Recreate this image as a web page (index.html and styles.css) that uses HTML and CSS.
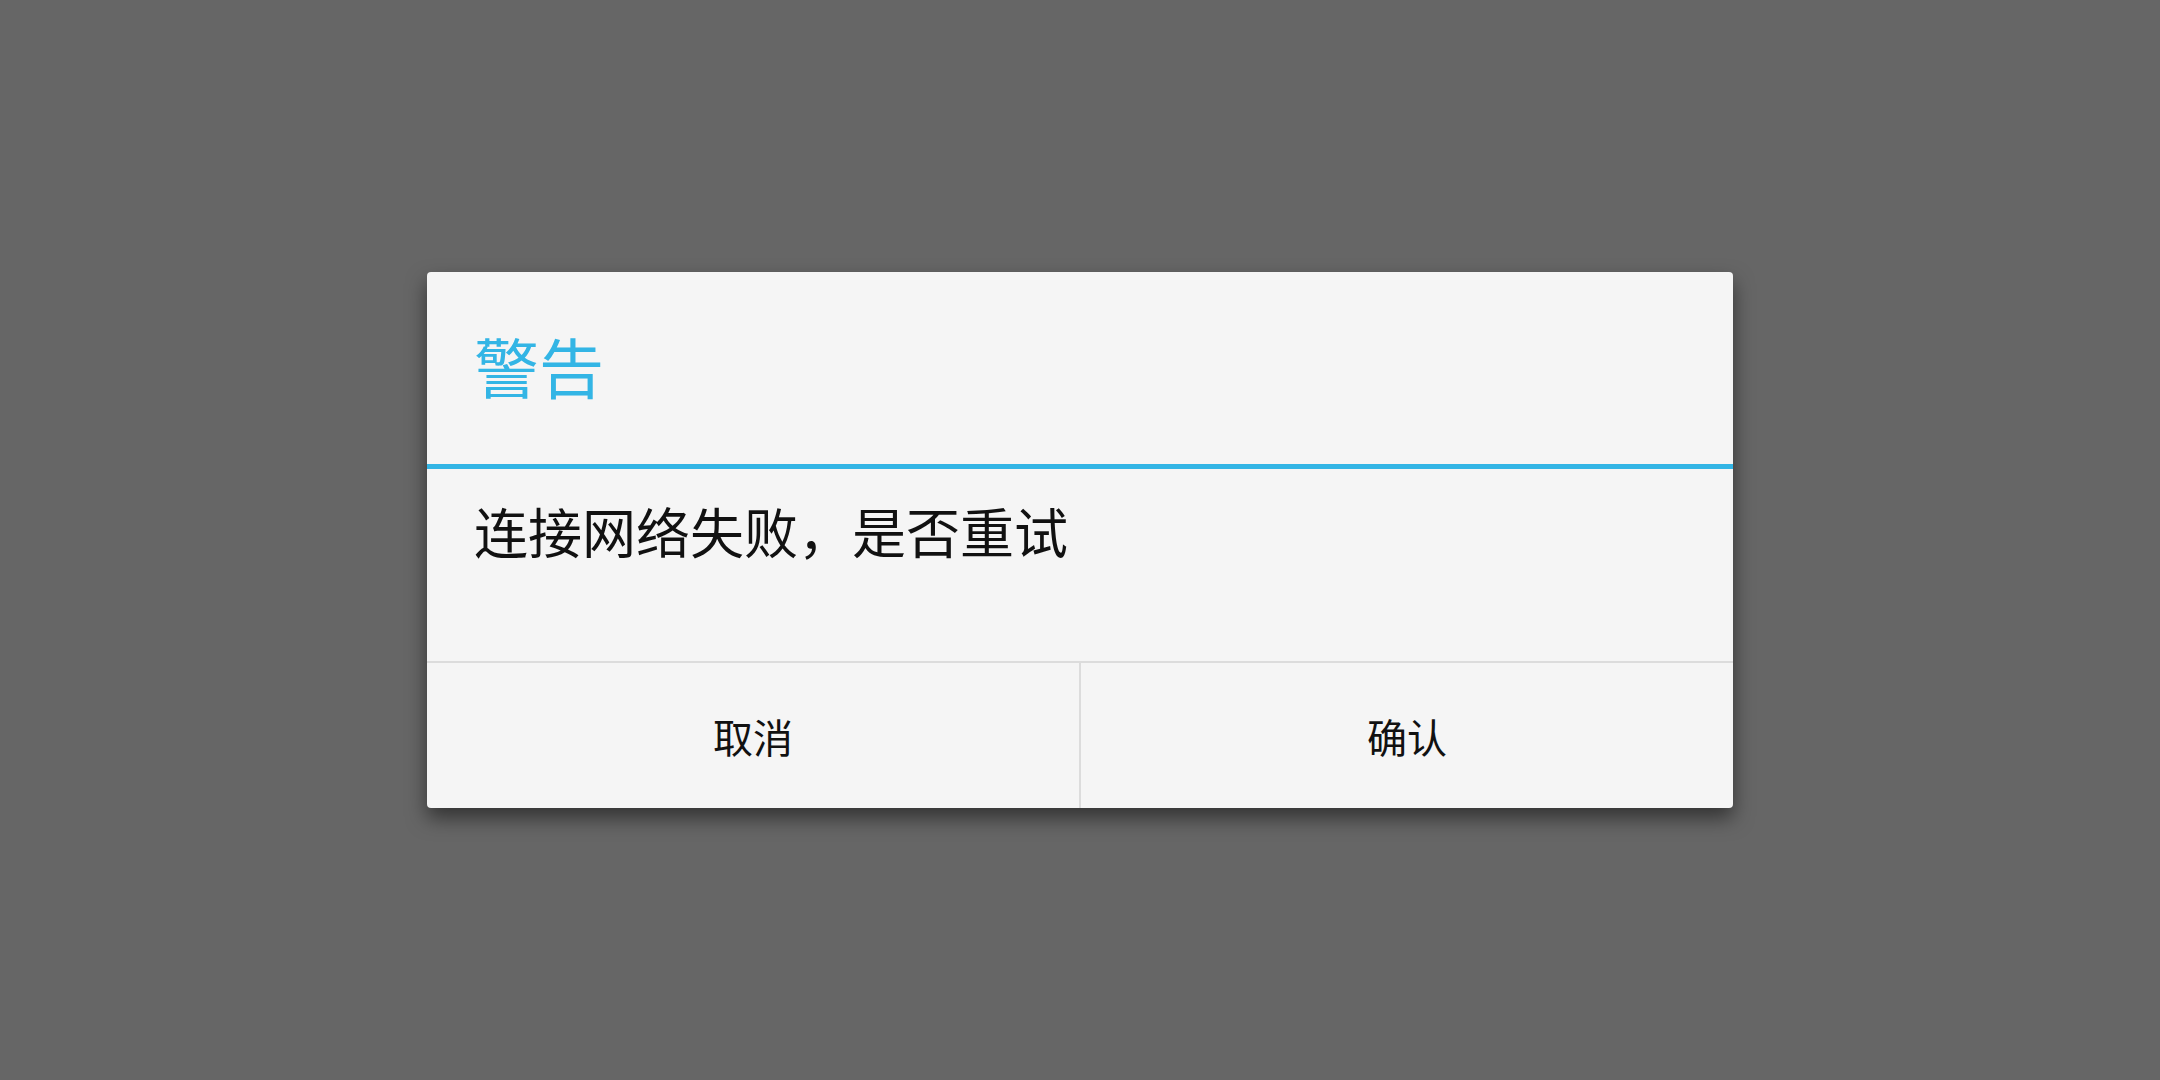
FILE: index.html
```html
<!DOCTYPE html>
<html lang="zh-CN">
<head>
<meta charset="utf-8">
<title>警告</title>
<link rel="stylesheet" href="styles.css">
</head>
<body>
<div class="screen">
  <div class="dialog">
    <div class="dialog-title">警告</div>
    <div class="dialog-rule"></div>
    <div class="dialog-message">连接网络失败，是否重试</div>
    <div class="dialog-buttons">
      <div class="dialog-button">取消</div>
      <div class="dialog-button dialog-button-right">确认</div>
    </div>
  </div>
</div>
</body>
</html>
```
FILE: styles.css
```css
html, body {
  margin: 0;
  padding: 0;
  width: 100%;
  height: 100%;
  background: #666666;
  font-family: "Noto Sans CJK SC", "Noto Sans", sans-serif;
}
.screen {
  width: 2160px;
  height: 1080px;
  display: flex;
  align-items: center;
  justify-content: center;
}
.dialog {
  width: 1306px;
  height: 536px;
  background: #f5f5f5;
  border-radius: 4px;
  box-shadow: 0 10px 20px rgba(0, 0, 0, 0.5);
  display: flex;
  flex-direction: column;
  overflow: hidden;
}
.dialog-title {
  height: 192px;
  display: flex;
  align-items: center;
  padding: 0 0 6px 47px;
  box-sizing: border-box;
  font-size: 65px;
  line-height: 65px;
  color: #33b5e5;
}
.dialog-rule {
  height: 5px;
  background: #33b5e5;
}
.dialog-message {
  height: 157px;
  padding: 35px 0 0 47px;
  font-size: 54px;
  line-height: 54px;
  color: #111111;
}
.dialog-buttons {
  flex: 1;
  display: flex;
  border-top: 2px solid #dcdcdc;
}
.dialog-button {
  flex: 1;
  display: flex;
  align-items: center;
  justify-content: center;
  font-size: 40px;
  color: #111111;
}
.dialog-button-right {
  border-left: 2px solid #dcdcdc;
}
```
